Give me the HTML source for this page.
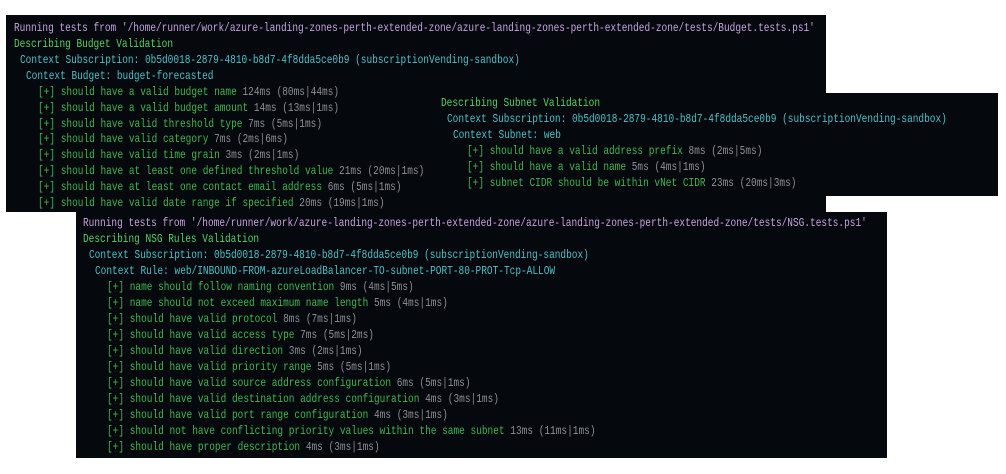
<!DOCTYPE html>
<html><head><meta charset="utf-8"><style>
body{margin:0;width:1006px;height:474px;background:#fff;position:relative;overflow:hidden;}
.p{position:absolute;background:#05080d;overflow:hidden;}
.l{position:absolute;white-space:pre;line-height:14px;font-family:"Liberation Mono","DejaVu Sans Mono",monospace;font-size:11.6px;transform-origin:0 50%;}
.pu{color:#c8a2e0}.g{color:#56d364}.c{color:#4cc2c9}.t{color:#3fb950}.m{color:#8c9096}
</style></head><body>
<div class="p" id="p1" style="left:6px;top:15px;width:820px;height:197px"></div>
<div class="p" id="p2" style="left:428px;top:93px;width:570px;height:103px"></div>
<div class="p" id="p3" style="left:76px;top:212px;width:811px;height:246px"></div>
<script>
var probe=document.createElement('div');probe.className='l';probe.style.visibility='hidden';probe.textContent='0123456789'.repeat(10);document.body.appendChild(probe);
var cw=probe.getBoundingClientRect().width/100;var sx=5.68/cw;document.body.removeChild(probe);
var P,ox,oy;
function S(id){P=document.getElementById(id);ox=P.offsetLeft;oy=P.offsetTop;}
function L(x,y,h){var d=document.createElement('div');d.className='l';d.style.left=(x-ox)+'px';d.style.top=(y-7-oy)+'px';d.style.transform='scaleX('+sx+')';d.innerHTML=h;P.appendChild(d);}
function T(x,y,s,m){L(x,y,'<span class="t">[+] '+s+'</span> <span class="m">'+m+'</span>');}
S('p1');
L(14,29,'<span class="pu">Running tests from \'/home/runner/work/azure-landing-zones-perth-extended-zone/azure-landing-zones-perth-extended-zone/tests/Budget.tests.ps1\'</span>');
L(14,45,'<span class="g">Describing Budget Validation</span>');
L(20,61,'<span class="c">Context Subscription: 0b5d0018-2879-4810-b8d7-4f8dda5ce0b9 (subscriptionVending-sandbox)</span>');
L(26,77,'<span class="c">Context Budget: budget-forecasted</span>');
var b=[['should have a valid budget name','124ms (80ms|44ms)'],['should have a valid budget amount','14ms (13ms|1ms)'],['should have valid threshold type','7ms (5ms|1ms)'],['should have valid category','7ms (2ms|6ms)'],['should have valid time grain','3ms (2ms|1ms)'],['should have at least one defined threshold value','21ms (20ms|1ms)'],['should have at least one contact email address','6ms (5ms|1ms)'],['should have valid date range if specified','20ms (19ms|1ms)']];
b.forEach(function(e,i){T(38,93+i*15.8,e[0],e[1]);});
S('p2');
L(441,104,'<span class="g">Describing Subnet Validation</span>');
L(447,120,'<span class="c">Context Subscription: 0b5d0018-2879-4810-b8d7-4f8dda5ce0b9 (subscriptionVending-sandbox)</span>');
L(453,136,'<span class="c">Context Subnet: web</span>');
T(467,152,'should have a valid address prefix','8ms (2ms|5ms)');
T(467,168,'should have a valid name','5ms (4ms|1ms)');
T(467,184,'subnet CIDR should be within vNet CIDR','23ms (20ms|3ms)');
S('p3');
L(83,224,'<span class="pu">Running tests from \'/home/runner/work/azure-landing-zones-perth-extended-zone/azure-landing-zones-perth-extended-zone/tests/NSG.tests.ps1\'</span>');
L(83,240,'<span class="g">Describing NSG Rules Validation</span>');
L(89,256,'<span class="c">Context Subscription: 0b5d0018-2879-4810-b8d7-4f8dda5ce0b9 (subscriptionVending-sandbox)</span>');
L(95,272,'<span class="c">Context Rule: web/INBOUND-FROM-azureLoadBalancer-TO-subnet-PORT-80-PROT-Tcp-ALLOW</span>');
var n=[['name should follow naming convention','9ms (4ms|5ms)'],['name should not exceed maximum name length','5ms (4ms|1ms)'],['should have valid protocol','8ms (7ms|1ms)'],['should have valid access type','7ms (5ms|2ms)'],['should have valid direction','3ms (2ms|1ms)'],['should have valid priority range','5ms (5ms|1ms)'],['should have valid source address configuration','6ms (5ms|1ms)'],['should have valid destination address configuration','4ms (3ms|1ms)'],['should have valid port range configuration','4ms (3ms|1ms)'],['should not have conflicting priority values within the same subnet','13ms (11ms|1ms)'],['should have proper description','4ms (3ms|1ms)']];
n.forEach(function(e,i){T(107,288+i*16,e[0],e[1]);});
</script>
</body></html>
